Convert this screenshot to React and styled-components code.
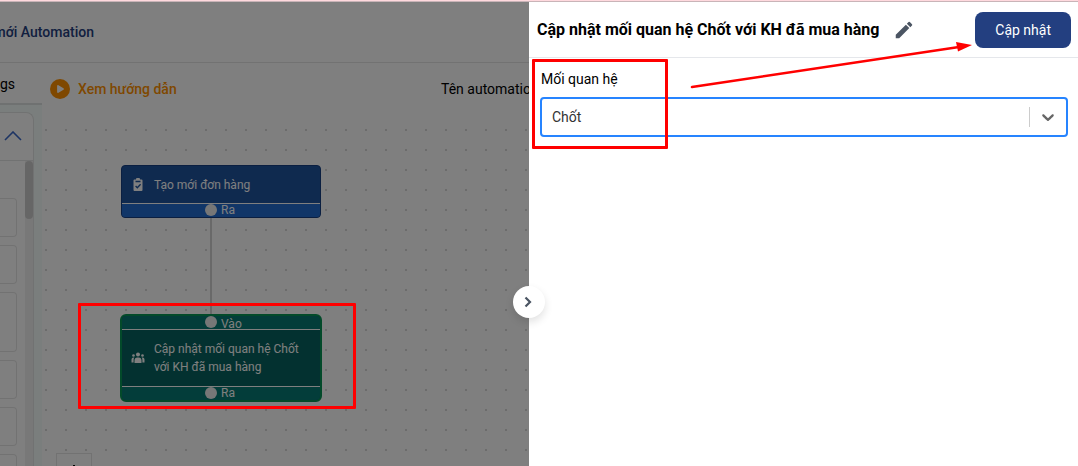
import React from 'react';
import styled, { createGlobalStyle } from 'styled-components';
import { MdEdit } from 'react-icons/md';

const ITEMS = [39, 39, 60, 39, 39, 39];

class App extends React.Component {

  state = { relation: 'chot' };

  handleRelation = (e) => {
    this.setState({ relation: e.target.value })
  };

  render() {

    return (
      <Screen>
        <GlobalStyle />
        <Strip />
        <Workspace>
          <Page>
            <PageHeader>
              <PageTitle>mới Automation</PageTitle>
            </PageHeader>
            <PageBody>
              <Sidebar>
                <Tab type="button">gs</Tab>
                <SidebarBody>
                  <Group>
                    <GroupHeader type="button" aria-label="Thu gọn">
                      <svg width="18" height="10" viewBox="0 0 18 10" fill="none">
                        <path d="M1 9L9 1L17 9" stroke="#3a68c8" strokeWidth="1.6" />
                      </svg>
                    </GroupHeader>
                    <GroupContent>
                      <Items>
                        {ITEMS.map((height, i) => <Item key={i} $height={height} />)}
                      </Items>
                      <Track><Thumb /></Track>
                    </GroupContent>
                  </Group>
                </SidebarBody>
              </Sidebar>
              <Main>
                <Toolbar>
                  <Guide href="#guide">
                    <svg width="20" height="20" viewBox="0 0 20 20">
                      <circle cx="10" cy="10" r="10" fill="#ff9100" />
                      <path d="M8 7L13 10L8 13Z" fill="#fff" stroke="#fff" strokeWidth="1.8" strokeLinejoin="round" />
                    </svg>
                    Xem hướng dẫn
                  </Guide>
                  <span>Tên automation</span>
                </Toolbar>
                <Canvas>
                  <Edge />
                  <OrderNode>
                    <NodeBody $height={37}>
                      <ClipboardIcon />
                      Tạo mới đơn hàng
                    </NodeBody>
                    <Port $color="#226cd0"><Handle />Ra</Port>
                  </OrderNode>
                  <RelationNode>
                    <Port $color="#067a74" $top><Handle />Vào</Port>
                    <NodeBody $height={56}>
                      <PeopleIcon />
                      <span>Cập nhật mối quan hệ Chốt với KH đã mua hàng</span>
                    </NodeBody>
                    <Port $color="#067a74"><Handle />Ra</Port>
                  </RelationNode>
                  <ZoomIn type="button" aria-label="Phóng to">
                    <svg width="12" height="12" viewBox="0 0 12 12">
                      <path d="M6 0V12M0 6H12" stroke="#000" strokeWidth="2" />
                    </svg>
                  </ZoomIn>
                </Canvas>
              </Main>
            </PageBody>
          </Page>
          <Backdrop />
          <NodeMark />
          <Drawer>
            <DrawerHeader>
              <Title>Cập nhật mối quan hệ Chốt với KH đã mua hàng</Title>
              <EditButton type="button" aria-label="Sửa tên"><MdEdit size={22} /></EditButton>
              <SaveButton type="button">Cập nhật</SaveButton>
            </DrawerHeader>
            <Form>
              <Label htmlFor="relation">Mối quan hệ</Label>
              <SelectBox>
                <Select id="relation" value={this.state.relation} onChange={this.handleRelation}>
                  <option value="chot">Chốt</option>
                </Select>
                <Indicator>
                  <svg width="20" height="20" viewBox="0 0 20 20" fill="#666">
                    <path d="M4.516 7.548c0.436-0.446 1.043-0.481 1.576 0l3.908 3.747 3.908-3.747c0.533-0.481 1.141-0.446 1.574 0 0.436 0.445 0.408 1.197 0 1.615-0.406 0.418-4.695 4.502-4.695 4.502-0.217 0.223-0.502 0.335-0.787 0.335s-0.57-0.112-0.789-0.335c0 0-4.287-4.084-4.695-4.502s-0.436-1.17 0-1.615z" />
                  </svg>
                </Indicator>
              </SelectBox>
            </Form>
            <CollapseButton type="button" aria-label="Đóng">
              <svg width="8" height="12" viewBox="0 0 8 12" fill="none">
                <path d="M1.5 1.5L6 6L1.5 10.5" stroke="#4b5563" strokeWidth="2.2" />
              </svg>
            </CollapseButton>
            <FieldMark />
            <Arrow width="290" height="60" viewBox="0 0 290 60">
              <path d="M3 48L270 8" stroke="#f00" strokeWidth="2.6" strokeLinecap="round" />
              <path d="M283 6L267 3L269 12.500Z" fill="#f00" />
            </Arrow>
          </Drawer>
        </Workspace>
      </Screen>
    );
  }
}

const ClipboardIcon = () => (
  <svg width="14" height="14" viewBox="0 0 14 14">
    <path d="M3.5 1.5H5a2 2 0 0 1 4 0h1.5a1 1 0 0 1 1 1V12a1 1 0 0 1-1 1h-7a1 1 0 0 1-1-1V2.5a1 1 0 0 1 1-1z" fill="#fff" />
    <path d="M4.5 3.5H9.5M4.6 8L6.3 9.7L9.6 6.2" fill="none" stroke="#1e549f" strokeWidth="1.3" />
  </svg>
);

const PeopleIcon = () => (
  <svg width="14" height="14" viewBox="0 0 14 14" fill="#fff">
    <circle cx="7" cy="3.5" r="2" />
    <circle cx="2.5" cy="4.5" r="1.3" />
    <circle cx="11.5" cy="4.5" r="1.3" />
    <path d="M3.5 12V9.5a3 3 0 0 1 3-3h1a3 3 0 0 1 3 3V12zM0.5 11.5V8.500a2 2 0 0 1 2-2h.8A4 4 0 0 0 2.6 9v2.500zM13.5 11.500V8.500a2 2 0 0 0-2-2h-.8A4 4 0 0 1 11.4 9v2.500z" />
  </svg>
);

export default App;


const GlobalStyle = createGlobalStyle`
    * {
      box-sizing: border-box;
    }

    body {
      margin: 0;
      font-family: Roboto, "Noto Sans", sans-serif;
      font-size: 14px;
      color: #000;
    }

    button, select {
      font: inherit;
      color: inherit;
      margin: 0;
      padding: 0;
      border: 0;
      background: none;
    }

    svg {
      display: block;
      flex: none;
    }
`;

const Screen = styled.div`
    display: flex;
    flex-direction: column;
    height: 100vh;
    overflow: hidden;
`;

const Strip = styled.div`
    flex: none;
    height: 2px;
    background: #ffd9de;
    border-bottom: 1px solid #c9b4b8;
`;

const Workspace = styled.div`
    position: relative;
    flex: 1;
    min-height: 0;
`;

const Page = styled.div`
    display: flex;
    flex-direction: column;
    height: 100%;
    background: #fff;
`;

const PageHeader = styled.header`
    display: flex;
    align-items: center;
    flex: none;
    height: 61px;
    border-bottom: 1px solid #e5e5e5;
`;

const PageTitle = styled.div`
    display: flex;
    justify-content: flex-end;
    width: 94px;
    font-weight: 500;
    white-space: nowrap;
    color: #24407f;
`;

const PageBody = styled.div`
    display: flex;
    flex: 1;
    min-height: 0;
`;

const Sidebar = styled.aside`
    display: flex;
    flex-direction: column;
    flex: none;
    width: 42px;
    background: #f5fcfa;
`;

const Tab = styled.button`
    flex: none;
    height: 42px;
    padding: 2px 28px 0 0;
    text-align: right;
    background: #fff;
    border-bottom: 2px solid #dfe3e2;
`;

const SidebarBody = styled.div`
    display: flex;
    flex: 1;
    min-height: 0;
    padding: 7px 8px 0 0;
`;

const Group = styled.div`
    display: flex;
    flex-direction: column;
    flex: 1;
    background: #fff;
    border: 1px solid #e2e5e4;
    border-width: 1px 1px 0 0;
    border-radius: 0 8px 0 0;
`;

const GroupHeader = styled.button`
    display: flex;
    align-items: center;
    justify-content: flex-end;
    flex: none;
    height: 48px;
    padding: 0 11px 2px 0;
    border-bottom: 1px solid #e2e5e4;
`;

const GroupContent = styled.div`
    display: flex;
    flex: 1;
    min-height: 0;
`;

const Items = styled.div`
    display: flex;
    flex-direction: column;
    gap: 8px;
    flex: 1;
    padding: 37px 8px 0 0;
    overflow: hidden;
`;

const Item = styled.div`
    flex: none;
    height: ${props => props.$height}px;
    border: 1px solid #e5e5e5;
    border-left: 0;
    border-radius: 0 4px 4px 0;
`;

const Track = styled.div`
    width: 8px;
    background: #f1f1f1;
`;

const Thumb = styled.div`
    height: 58px;
    border-radius: 4px;
    background: #cdcdcd;
`;

const Main = styled.main`
    display: flex;
    flex-direction: column;
    flex: 1;
`;

const Toolbar = styled.div`
    display: grid;
    grid-template-columns: 391px 1fr;
    align-items: center;
    flex: none;
    height: 52px;
    padding-left: 8px;
`;

const Guide = styled.a`
    display: flex;
    align-items: center;
    gap: 8px;
    font-weight: 500;
    color: #ff9100;
    text-decoration: none;
`;

const Canvas = styled.div`
    position: relative;
    flex: 1;
    overflow: hidden;
    background: radial-gradient(circle, #d9d9d9 1px, transparent 1px) -6px 5px / 20px 20px;
`;

const Node = styled.div`
    position: absolute;
    overflow: hidden;
    font-size: 12px;
    line-height: 18px;
    color: #fff;
`;

const OrderNode = styled(Node)`
    left: 79px;
    top: 50px;
    width: 200px;
    background: #1e549f;
    border: 1px solid #163f83;
    border-radius: 4px;
`;

const RelationNode = styled(Node)`
    left: 78px;
    top: 199px;
    width: 202px;
    background: #066360;
    border: 2px solid #069455;
    border-radius: 6px;
`;

const NodeBody = styled.div`
    display: flex;
    align-items: center;
    gap: 9px;
    height: ${props => props.$height}px;
    padding: 0 12px 0 9px;
`;

const Port = styled.div`
    display: flex;
    align-items: flex-start;
    gap: 4px;
    height: 14px;
    padding-left: 83px;
    line-height: ${props => props.$top ? 16 : 12}px;
    background: ${props => props.$color};
    border: 0 solid #fff;
    border-width: ${props => props.$top ? '0 0 1px' : '1px 0 0'};
`;

const Handle = styled.div`
    flex: none;
    width: 12px;
    height: 12px;
    border-radius: 50%;
    background: #eee;
`;

const Edge = styled.div`
    position: absolute;
    left: 168px;
    top: 100px;
    width: 2px;
    height: 104px;
    background: #d2d2d2;
`;

const ZoomIn = styled.button`
    position: absolute;
    left: 14px;
    top: 338px;
    display: flex;
    justify-content: center;
    width: 36px;
    padding: 11px 0;
    background: #fff;
    border: 1px solid #e5e5e5;
`;

const Backdrop = styled.div`
    position: absolute;
    inset: 0;
    background: rgba(0, 0, 0, 0.5);
`;

const Drawer = styled.section`
    position: absolute;
    top: 0;
    right: 0;
    bottom: 0;
    left: 529px;
    background: #fff;
`;

const DrawerHeader = styled.header`
    display: flex;
    align-items: center;
    height: 56px;
    padding: 0 7px 0 8px;
    border-bottom: 1px solid #e5e7eb;
`;

const Title = styled.h1`
    margin: 0;
    font-size: 16px;
    font-weight: 700;
    white-space: nowrap;
`;

const EditButton = styled.button`
    margin-left: 14px;
    color: #4b5563;
    cursor: pointer;
`;

const SaveButton = styled.button`
    height: 36px;
    margin-left: auto;
    padding: 0 20px;
    border-radius: 8px;
    background: #233f80;
    color: #fff;
    cursor: pointer;
`;

const Form = styled.div`
    display: flex;
    flex-direction: column;
    gap: 8px;
    padding: 11px 10px 0 11px;
`;

const Label = styled.label`
    padding-left: 1px;
    line-height: 20px;
`;

const SelectBox = styled.div`
    position: relative;
`;

const Select = styled.select`
    display: block;
    width: 100%;
    height: 40px;
    padding: 0 48px 0 10px;
    appearance: none;
    color: #333;
    background: #fff;
    border: 2px solid #2684ff;
    border-radius: 4px;
    outline: none;
`;

const Indicator = styled.div`
    position: absolute;
    top: 10px;
    right: 2px;
    padding: 0 8px;
    border-left: 1px solid #ccc;
    pointer-events: none;
`;

const CollapseButton = styled.button`
    position: absolute;
    left: -16px;
    top: 284px;
    display: flex;
    align-items: center;
    justify-content: center;
    width: 32px;
    height: 32px;
    padding-right: 2px;
    border-radius: 50%;
    background: #fff;
    box-shadow: 0 4px 8px rgba(0, 0, 0, 0.12);
    cursor: pointer;
`;

const Mark = styled.div`
    position: absolute;
    border: 3px solid #f00;
    border-radius: 1px;
    pointer-events: none;
`;

const NodeMark = styled(Mark)`
    left: 78px;
    top: 301px;
    width: 278px;
    height: 106px;
`;

const FieldMark = styled(Mark)`
    left: 3px;
    top: 57px;
    width: 136px;
    height: 90px;
`;

const Arrow = styled.svg`
    position: absolute;
    left: 160px;
    top: 37px;
    pointer-events: none;
`;
